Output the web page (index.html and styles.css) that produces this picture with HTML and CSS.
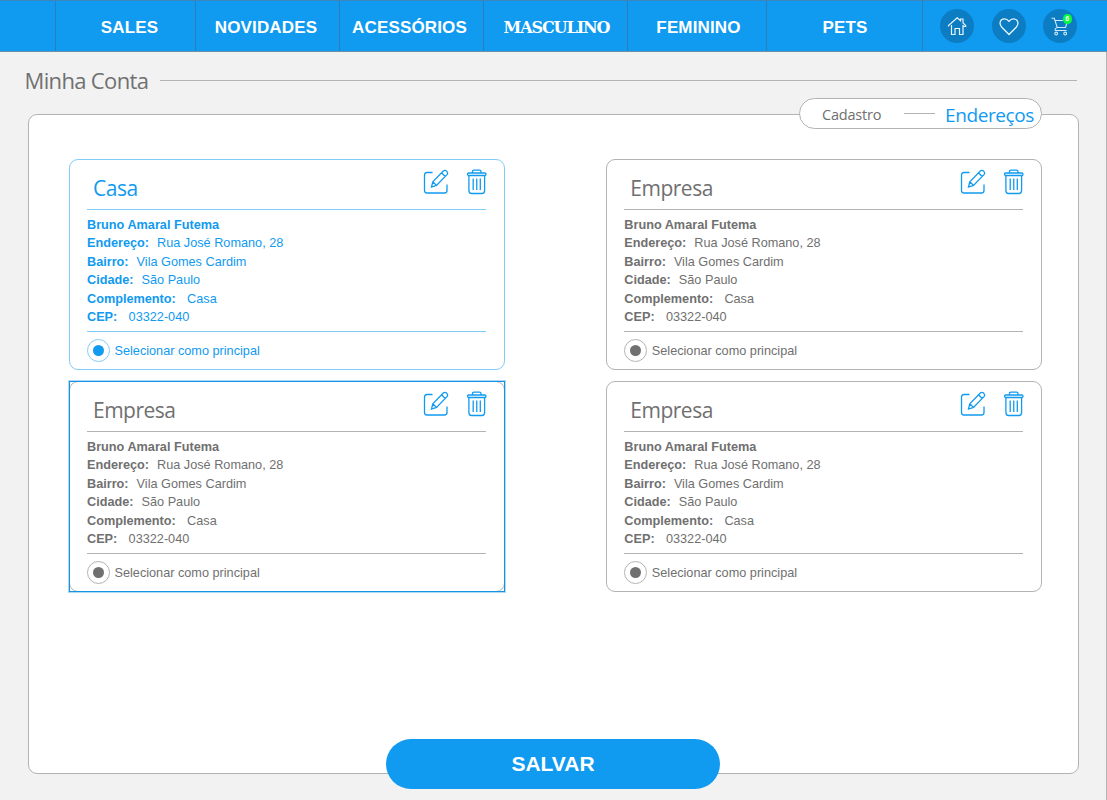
FILE: index.html
```html
<!DOCTYPE html>
<html lang="pt-BR">
<head>
<meta charset="utf-8">
<title>Minha Conta</title>
<link rel="stylesheet" href="styles.css">
</head>
<body>
<svg class="defs" width="0" height="0">
  <symbol id="edit" viewBox="0 0 26 26">
    <path d="M9.5 3.5H4Q1.500 3.500 1.500 6V21.500Q1.500 24 4 24H21.500Q24 24 24 21.500V15.500"/>
    <path d="M8.500 18L9.800 12.800L20.300 2Q21.800 .700 23.600 2.100Q25.400 4 24 5.600L13.500 16.400ZM9.800 12.800L13.500 16.400M18.500 3.800L22.200 7.500"/>
  </symbol>
  <symbol id="trash" viewBox="0 0 22 26">
    <rect x="1.500" y="4" width="18.500" height="2.500" rx="1.200"/>
    <path d="M6.500 4V2.700Q6.500 1.200 8 1.200H13.500Q15 1.200 15 2.700V4M2.900 6.500V21.500Q2.900 24.500 5.500 24.500H16Q18.600 24.500 18.600 21.500V6.500M7.200 9.500V21M10.750 9.500V21M14.300 9.500V21"/>
  </symbol>
</svg>
<header class="topbar">
  <nav class="menu">
    <a class="item sales">SALES</a>
    <a class="item novidades">NOVIDADES</a>
    <a class="item acessorios">ACESSÓRIOS</a>
    <a class="item masculino">MASCULINO</a>
    <a class="item feminino">FEMININO</a>
    <a class="item pets">PETS</a>
  </nav>
  <div class="actions">
    <a class="round"><svg width="34" height="34" viewBox="0 0 34 34"><path d="M11.500 16V25.500H15V19.500H19.500V25.500H23V16M8.500 17.500V16.500L17.200 8.800L20.500 11.700V10H23V14L25.700 16.500V17.500H23"/></svg></a>
    <a class="round heart"><svg width="34" height="34" viewBox="0 0 34 34"><path d="M17 25.500L9.800 18.300C6.500 14.500 8.300 9.800 12.500 9.800C14.700 9.800 16 11 17 12.300C18 11 19.300 9.800 21.500 9.800C25.700 9.800 27.500 14.500 24.200 18.300Z"/></svg></a>
    <a class="round cart"><svg width="34" height="34" viewBox="0 0 34 34"><path d="M8.500 9.300H11.300L14.200 18.500H22.500L24.500 12.500M12 11.500H20M14.200 18.500Q11.500 19.500 12.300 21.500H23.500"/><circle cx="13.200" cy="24.500" r="1.400"/><circle cx="22.200" cy="24.500" r="1.400"/></svg><span class="badge">6</span></a>
  </div>
</header>
<main class="page">
  <div class="heading"><h1>Minha Conta</h1><span class="line"></span></div>
  <section class="panel">
    <div class="tabs"><a class="tab">Cadastro</a><span class="dash"></span><a class="tab active">Endereços</a></div>
    <div class="cards">
      <article class="card principal">
        <div class="card-head"><h2>Casa</h2><svg class="edit"><use href="#edit"/></svg><svg class="trash"><use href="#trash"/></svg></div>
        <div class="details">
          <p><b>Bruno Amaral Futema</b></p>
          <p><b>Endereço:</b><span>Rua José Romano, 28</span></p>
          <p><b>Bairro:</b><span>Vila Gomes Cardim</span></p>
          <p><b>Cidade:</b><span>São Paulo</span></p>
          <p class="wide"><b>Complemento:</b><span>Casa</span></p>
          <p class="wide"><b>CEP:</b><span>03322-040</span></p>
        </div>
        <div class="choice"><i class="radio"></i><span>Selecionar como principal</span></div>
      </article>
      <article class="card">
        <div class="card-head"><h2>Empresa</h2><svg class="edit"><use href="#edit"/></svg><svg class="trash"><use href="#trash"/></svg></div>
        <div class="details">
          <p><b>Bruno Amaral Futema</b></p>
          <p><b>Endereço:</b><span>Rua José Romano, 28</span></p>
          <p><b>Bairro:</b><span>Vila Gomes Cardim</span></p>
          <p><b>Cidade:</b><span>São Paulo</span></p>
          <p class="wide"><b>Complemento:</b><span>Casa</span></p>
          <p class="wide"><b>CEP:</b><span>03322-040</span></p>
        </div>
        <div class="choice"><i class="radio"></i><span>Selecionar como principal</span></div>
      </article>
      <article class="card focused">
        <div class="card-head"><h2>Empresa</h2><svg class="edit"><use href="#edit"/></svg><svg class="trash"><use href="#trash"/></svg></div>
        <div class="details">
          <p><b>Bruno Amaral Futema</b></p>
          <p><b>Endereço:</b><span>Rua José Romano, 28</span></p>
          <p><b>Bairro:</b><span>Vila Gomes Cardim</span></p>
          <p><b>Cidade:</b><span>São Paulo</span></p>
          <p class="wide"><b>Complemento:</b><span>Casa</span></p>
          <p class="wide"><b>CEP:</b><span>03322-040</span></p>
        </div>
        <div class="choice"><i class="radio"></i><span>Selecionar como principal</span></div>
      </article>
      <article class="card">
        <div class="card-head"><h2>Empresa</h2><svg class="edit"><use href="#edit"/></svg><svg class="trash"><use href="#trash"/></svg></div>
        <div class="details">
          <p><b>Bruno Amaral Futema</b></p>
          <p><b>Endereço:</b><span>Rua José Romano, 28</span></p>
          <p><b>Bairro:</b><span>Vila Gomes Cardim</span></p>
          <p><b>Cidade:</b><span>São Paulo</span></p>
          <p class="wide"><b>Complemento:</b><span>Casa</span></p>
          <p class="wide"><b>CEP:</b><span>03322-040</span></p>
        </div>
        <div class="choice"><i class="radio"></i><span>Selecionar como principal</span></div>
      </article>
    </div>
    <button class="save">SALVAR</button>
  </section>
</main>
</body>
</html>
```
FILE: styles.css
```css
* { box-sizing: border-box; }
body { margin: 0; width: 1107px; height: 800px; overflow: hidden; background: #f2f2f2; color: #707070; font: 12.7px/18.4px "Liberation Sans", Arial, sans-serif; }
h1, h2, p { margin: 0; font-weight: 400; }
.defs { display: block; height: 0; }
.topbar { display: flex; height: 52px; padding-left: 55px; background: #109af0; border-top: 1px solid #3c86bb; border-bottom: 1px solid #6b90aa; }
.menu { display: grid; grid-template-columns: 140px 144px 144px 144px 139px 157px; }
.item { display: flex; align-items: center; justify-content: center; padding-top: 4px; border-left: 1px solid #2d7fb9; color: #fff; font-size: 17px; font-weight: 700; letter-spacing: .15px; }
.sales { padding-left: 8px; }
.novidades { padding-right: 3px; }
.acessorios { padding-right: 4px; }
.masculino { padding-left: 2px; font-family: "DejaVu Serif", serif; font-size: 16px; letter-spacing: -1.1px; }
.feminino { padding-left: 3px; }
.pets { padding-left: 1px; border-right: 1px solid #2d7fb9; }
.actions { display: flex; gap: 17.500px; padding: 8px 0 0 17px; }
.round { position: relative; width: 34px; height: 34px; border-radius: 50%; background: #0c7dc3; }
.round svg { display: block; fill: none; stroke: #e8f6ff; stroke-width: 1.200; }
.heart svg { stroke-width: 1.300; }
.cart svg { stroke: #cfe9f8; stroke-width: 1.100; }
.badge { position: absolute; left: 19.500px; top: 5px; width: 9.500px; height: 9.500px; border-radius: 50%; background: #05fb3d; color: #fff; font-size: 7px; font-weight: 700; line-height: 10px; text-align: center; }
.page { height: 748px; padding: 11px 29px 0 24.500px; border-right: 1px solid #b3b3b3; }
.heading { display: flex; align-items: center; height: 34px; }
.heading h1 { width: 135.500px; font: 22px/34px "Open Sans", "Noto Sans", sans-serif; letter-spacing: -.65px; white-space: nowrap; }
.line { flex: 1; height: 1px; background: #b3b3b3; }
.panel { position: relative; width: 1051px; height: 660px; margin: 17px 0 0 3.500px; padding: 44px 0 0 40px; border: 1px solid #b3b3b3; border-radius: 9px; background: #fff; }
.tabs { position: absolute; left: 770px; top: -17px; display: flex; align-items: center; width: 243px; height: 31px; padding-left: 22px; border: 1px solid #b3b3b3; border-radius: 16px; background: #fff; font-family: "Open Sans", "Noto Sans", sans-serif; }
.tab { width: 82px; padding-top: 3px; font-size: 14.500px; letter-spacing: -.2px; white-space: nowrap; }
.dash { width: 31px; height: 1px; background: #b3b3b3; }
.active { width: auto; margin-left: 10px; color: #109af0; font-size: 19px; letter-spacing: -.4px; }
.cards { display: grid; grid-template-columns: 436px 436px; grid-auto-rows: 211px; gap: 11px 101.300px; }
.card { position: relative; padding: 0 18px 0 17px; border: 1px solid #b3b3b3; border-radius: 9px; }
.principal { color: #109af0; border-color: #84ccf8; }
.focused::after { content: ""; position: absolute; inset: -1px; border: 1px solid #1793e4; box-shadow: 0 0 0 1px rgba(23, 147, 228, .35); }
.card-head { display: flex; align-items: flex-start; height: 50px; padding: 9px 0 0 6px; border-bottom: 1px solid #b3b3b3; }
.card-head h2 { flex: 1; padding-top: 4px; font: 21px/30px "Open Sans", "Noto Sans", sans-serif; letter-spacing: -.5px; }
.card-head svg { fill: none; stroke: #109af0; stroke-width: 1.300; }
.edit { width: 26px; height: 26px; margin-right: 17px; }
.trash { width: 22px; height: 26px; margin-right: -1.750px; }
.details { height: 122px; padding-top: 6px; border-bottom: 1px solid #b3b3b3; }
.details p { display: flex; gap: 8px; }
.details .wide { gap: 11.300px; }
.choice { display: flex; align-items: center; height: 37px; gap: 4.500px; }
.choice span { padding-top: 1px; }
.principal .card-head, .principal .details { border-bottom-color: #84ccf8; }
.radio { width: 23px; height: 23px; padding: 5px; border: 1px solid #b3b3b3; border-radius: 50%; background: currentColor; background-clip: content-box; }
.principal .radio { border-color: #84ccf8; }
.save { position: absolute; left: 357px; top: 624.400px; width: 334px; height: 50px; padding: 0; border: 0; border-radius: 25px; background: #109af0; color: #fff; font: 700 21px/48px "Liberation Sans", Arial, sans-serif; }
```
